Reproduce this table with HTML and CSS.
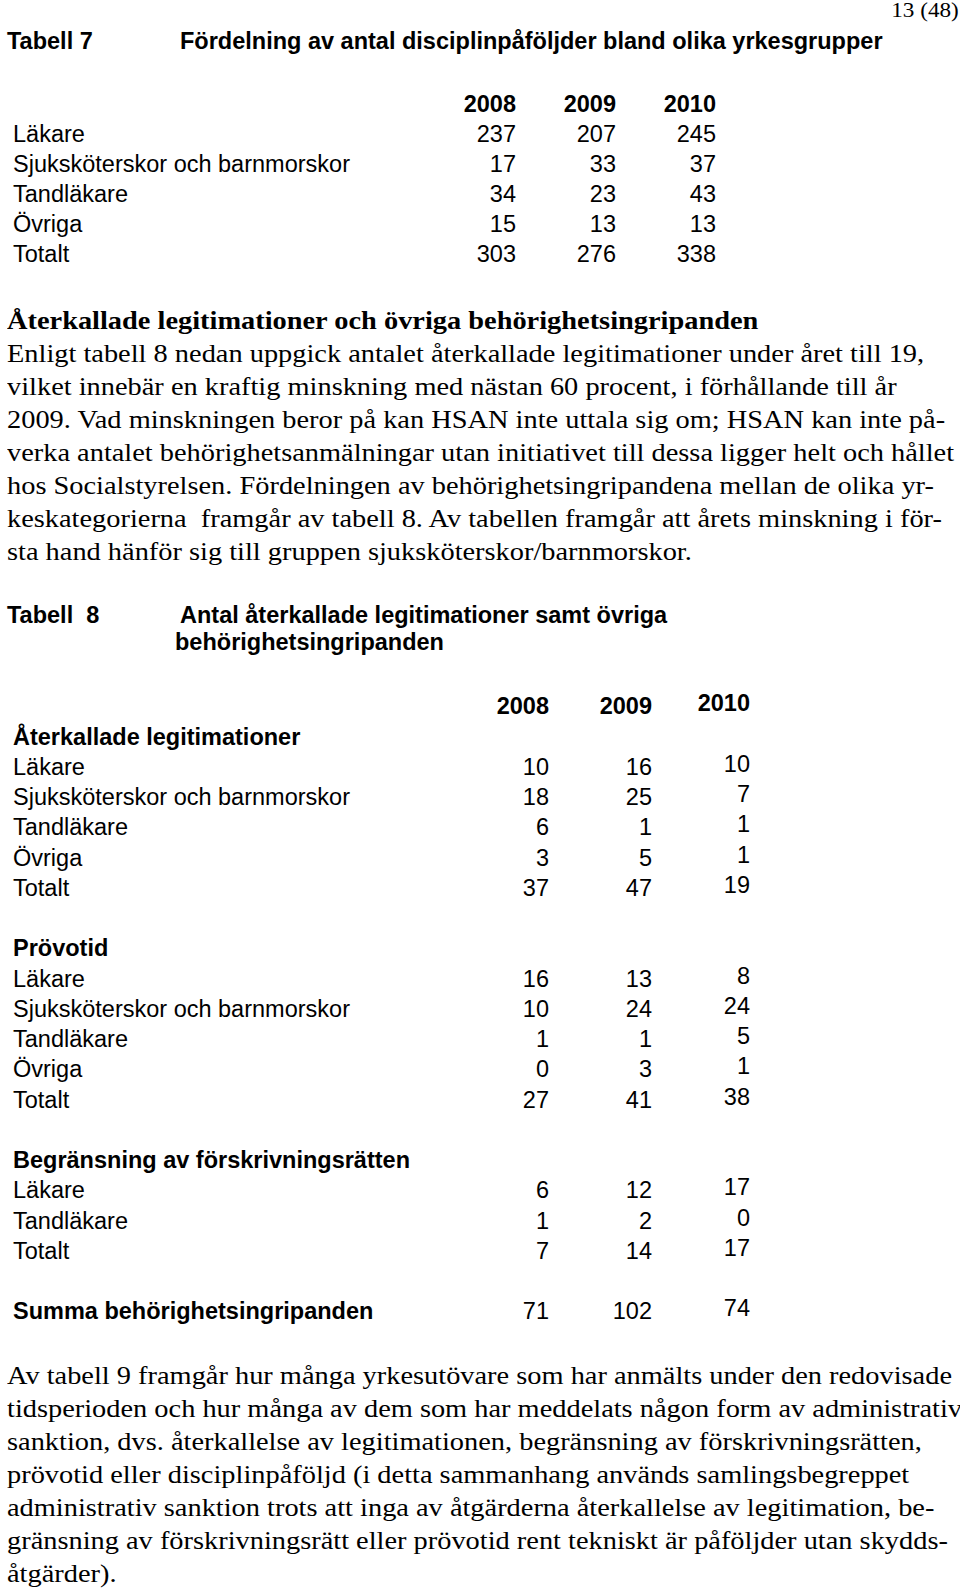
FILE: index.html
```html
<!DOCTYPE html>
<html lang="sv">
<head>
<meta charset="utf-8">
<title>13 (48)</title>
<link rel="stylesheet" href="styles.css">
</head>
<body>
<div class="page">
  <div class="pageno"><span class="pn">13 (48)</span></div>

  <div class="caption cap7">
    <div class="cap-label">Tabell 7</div>
    <div class="cap-title">Fördelning av antal disciplinpåföljder bland olika yrkesgrupper</div>
  </div>

  <div class="t7">
    <div></div><div class="yr">2008</div><div class="yr">2009</div><div class="yr">2010</div>
    <div>Läkare</div><div class="n">237</div><div class="n">207</div><div class="n">245</div>
    <div>Sjuksköterskor och barnmorskor</div><div class="n">17</div><div class="n">33</div><div class="n">37</div>
    <div>Tandläkare</div><div class="n">34</div><div class="n">23</div><div class="n">43</div>
    <div>Övriga</div><div class="n">15</div><div class="n">13</div><div class="n">13</div>
    <div>Totalt</div><div class="n">303</div><div class="n">276</div><div class="n">338</div>
  </div>

  <div class="prose prose1">
    <div class="ln hd">Återkallade legitimationer och övriga behörighetsingripanden</div>
    <div class="ln">Enligt tabell 8 nedan uppgick antalet återkallade legitimationer under året till 19,</div>
    <div class="ln">vilket innebär en kraftig minskning med nästan 60 procent, i förhållande till år</div>
    <div class="ln">2009. Vad minskningen beror på kan HSAN inte uttala sig om; HSAN kan inte på-</div>
    <div class="ln">verka antalet behörighetsanmälningar utan initiativet till dessa ligger helt och hållet</div>
    <div class="ln">hos Socialstyrelsen. Fördelningen av behörighetsingripandena mellan de olika yr-</div>
    <div class="ln">keskategorierna  framgår av tabell 8. Av tabellen framgår att årets minskning i för-</div>
    <div class="ln">sta hand hänför sig till gruppen sjuksköterskor/barnmorskor.</div>
  </div>

  <div class="caption cap8">
    <div class="cap-label">Tabell  8</div>
    <div class="cap-title">Antal återkallade legitimationer samt övriga<br>behörighetsingripanden</div>
  </div>

  <div class="t8">
    <div></div><div class="yr">2008</div><div class="yr">2009</div><div class="yr c3">2010</div>

    <div class="grp">Återkallade legitimationer</div>
    <div>Läkare</div><div class="n">10</div><div class="n">16</div><div class="n c3">10</div>
    <div>Sjuksköterskor och barnmorskor</div><div class="n">18</div><div class="n">25</div><div class="n c3">7</div>
    <div>Tandläkare</div><div class="n">6</div><div class="n">1</div><div class="n c3">1</div>
    <div>Övriga</div><div class="n">3</div><div class="n">5</div><div class="n c3">1</div>
    <div>Totalt</div><div class="n">37</div><div class="n">47</div><div class="n c3">19</div>
    <div class="gap"></div>

    <div class="grp">Prövotid</div>
    <div>Läkare</div><div class="n">16</div><div class="n">13</div><div class="n c3">8</div>
    <div>Sjuksköterskor och barnmorskor</div><div class="n">10</div><div class="n">24</div><div class="n c3">24</div>
    <div>Tandläkare</div><div class="n">1</div><div class="n">1</div><div class="n c3">5</div>
    <div>Övriga</div><div class="n">0</div><div class="n">3</div><div class="n c3">1</div>
    <div>Totalt</div><div class="n">27</div><div class="n">41</div><div class="n c3">38</div>
    <div class="gap"></div>

    <div class="grp">Begränsning av förskrivningsrätten</div>
    <div>Läkare</div><div class="n">6</div><div class="n">12</div><div class="n c3">17</div>
    <div>Tandläkare</div><div class="n">1</div><div class="n">2</div><div class="n c3">0</div>
    <div>Totalt</div><div class="n">7</div><div class="n">14</div><div class="n c3">17</div>
    <div class="gap"></div>

    <div class="sum">Summa behörighetsingripanden</div><div class="n">71</div><div class="n">102</div><div class="n c3">74</div>
  </div>

  <div class="prose prose2">
    <div class="ln">Av tabell 9 framgår hur många yrkesutövare som har anmälts under den redovisade</div>
    <div class="ln">tidsperioden och hur många av dem som har meddelats någon form av administrativ</div>
    <div class="ln">sanktion, dvs. återkallelse av legitimationen, begränsning av förskrivningsrätten,</div>
    <div class="ln">prövotid eller disciplinpåföljd (i detta sammanhang används samlingsbegreppet</div>
    <div class="ln">administrativ sanktion trots att inga av åtgärderna återkallelse av legitimation, be-</div>
    <div class="ln">gränsning av förskrivningsrätt eller prövotid rent tekniskt är påföljder utan skydds-</div>
    <div class="ln">åtgärder).</div>
  </div>
</div>
</body>
</html>
```

FILE: styles.css
```css
html, body {
  margin: 0;
  padding: 0;
  background: #ffffff;
  overflow: hidden;
}

body {
  color: #000000;
  font-family: "Liberation Sans", Arial, sans-serif;
}

.page {
  width: 960px;
}

.pageno {
  font-family: "Liberation Serif", "Times New Roman", serif;
  font-size: 20.5px;
  line-height: 20px;
  text-align: right;
  padding-right: 1px;
}

.pn {
  display: inline-block;
  white-space: nowrap;
  transform: scaleX(1.13);
  transform-origin: 100% 0;
}

.caption {
  display: flex;
  font-weight: bold;
  font-size: 23.5px;
  padding-left: 7px;
}

.cap-label {
  flex: none;
  white-space: pre;
}

.cap7 {
  margin-top: 6px;
  line-height: 30.4px;
}

.cap7 .cap-label {
  width: 173px;
}

.cap8 {
  margin-top: 33.3px;
  line-height: 27px;
}

.cap8 .cap-label {
  width: 168px;
}

.cap8 .cap-title {
  text-indent: 5px;
}

.t7,
.t8 {
  display: grid;
  padding-left: 13px;
  font-size: 23.5px;
  white-space: nowrap;
}

.t7 {
  grid-template-columns: 403px 100px 100px 100px;
  margin-top: 33px;
  line-height: 30px;
}

.t8 {
  grid-template-columns: 436px 100px 103px 98px;
  margin-top: 35.9px;
  line-height: 30.25px;
}

.yr {
  font-weight: bold;
  text-align: right;
}

.n {
  text-align: right;
}

.c3 {
  margin-top: -3px;
}

.grp {
  grid-column: 1 / -1;
  font-weight: bold;
}

.sum {
  font-weight: bold;
}

.gap {
  grid-column: 1 / -1;
  height: 30.25px;
}

.prose {
  margin-left: 7px;
  font-family: "Liberation Serif", "Times New Roman", serif;
  font-size: 25px;
  line-height: 33px;
  transform: scaleX(1.135);
  transform-origin: 0 0;
}

.ln {
  white-space: pre;
}

.prose1 {
  margin-top: 34.8px;
}

.prose2 {
  margin-top: 32.3px;
}

.hd {
  font-weight: bold;
}
```
